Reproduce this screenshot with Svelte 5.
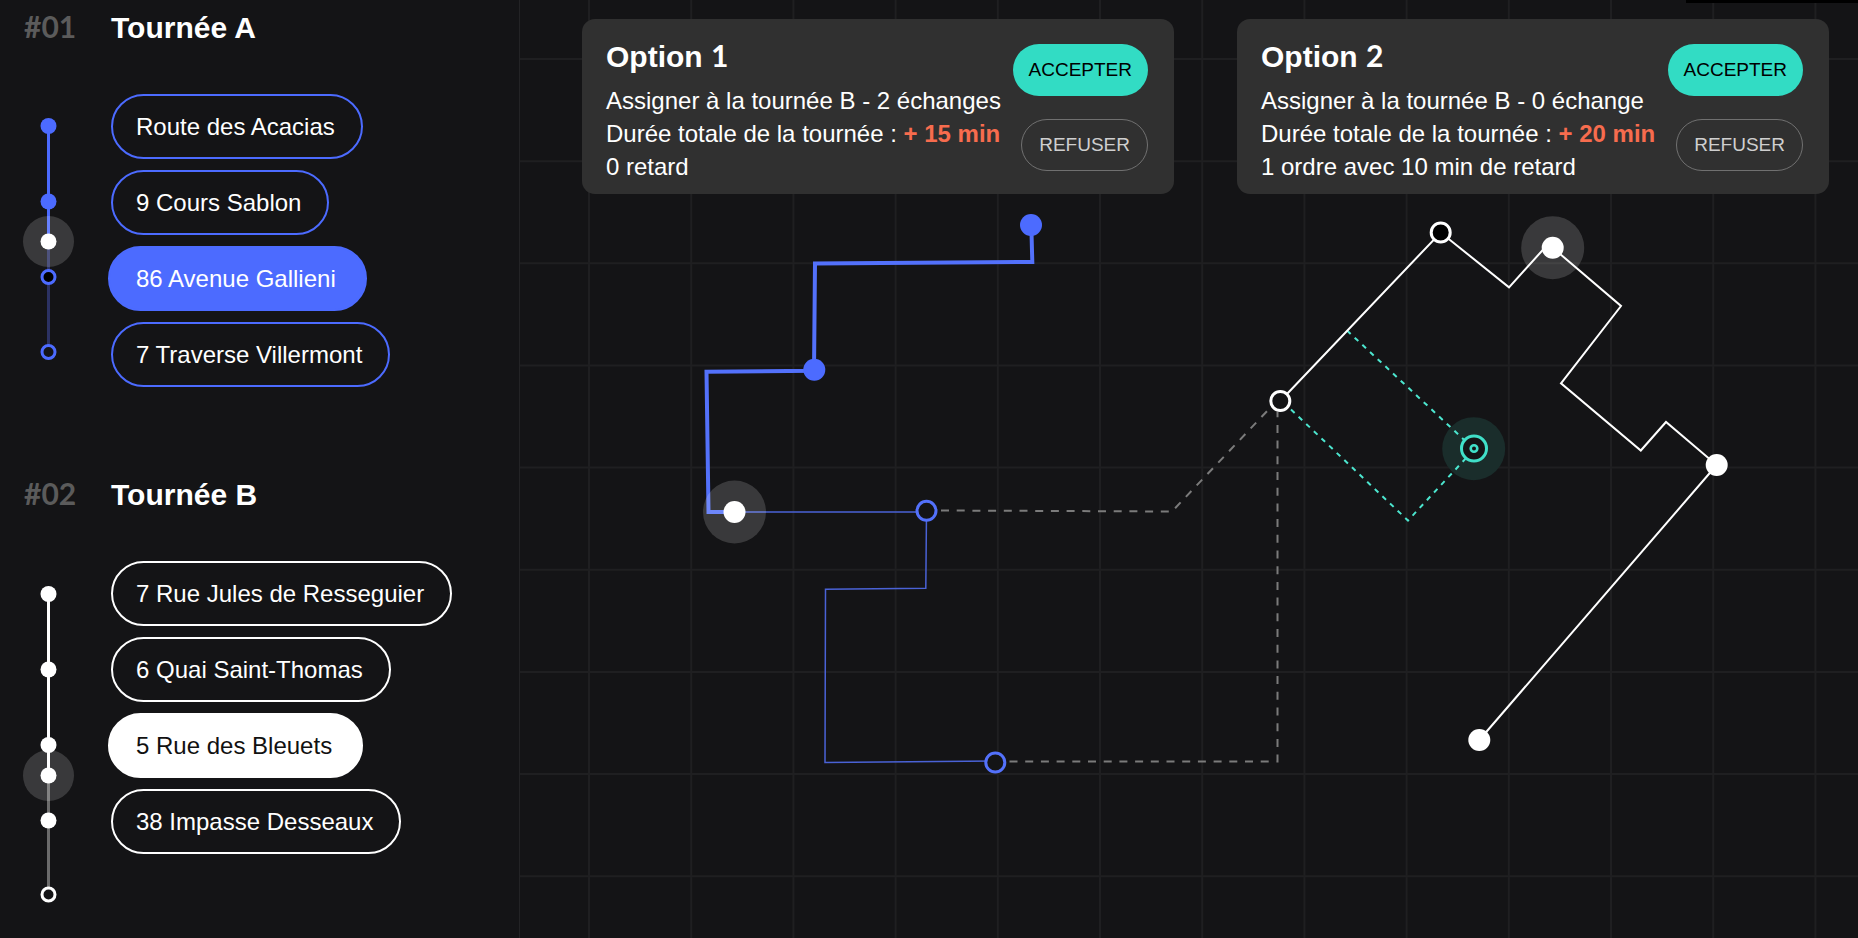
<script>
  const tours = [
    {
      id: '#01',
      name: 'Tournée A',
      tone: 'blue',
      stops: ['Route des Acacias', '9 Cours Sablon', '86 Avenue Gallieni', '7 Traverse Villermont'],
      active: 2,
      position: 147.5,
      end: 258,
      done: [32, 107.5],
      open: [183, 258],
      current: 183
    },
    {
      id: '#02',
      name: 'Tournée B',
      tone: 'white',
      stops: ['7 Rue Jules de Resseguier', '6 Quai Saint-Thomas', '5 Rue des Bleuets', '38 Impasse Desseaux'],
      active: 2,
      position: 214.5,
      end: 333.5,
      done: [33, 108.5, 184, 259.5],
      open: [333.5],
      current: null
    }
  ];

  const options = [
    { n: 1, plan: 'Assigner à la tournée B - 2 échanges', extra: '+ 15 min', delay: '0 retard' },
    { n: 2, plan: 'Assigner à la tournée B - 0 échange', extra: '+ 20 min', delay: '1 ordre avec 10 min de retard' }
  ];

  const columns = Array.from({ length: 13 }, (_, i) => 589 + i * 102.2);
  const rows = Array.from({ length: 9 }, (_, i) => 59 + i * 102.15);
</script>

<div class="page">
  <aside class="sidebar">
    {#each tours as tour}
      <section class="tour {tour.tone}">
        <span class="tour-id">{tour.id}</span>
        <h2>{tour.name}</h2>
        <svg class="timeline" width="50" height="260" viewBox="0 0 50 260" aria-hidden="true">
          <line class="ahead" x1="24.5" x2="24.5" y1={tour.position} y2={tour.end} />
          <line class="travelled" x1="24.5" x2="24.5" y1={tour.done[0]} y2={tour.position} />
          <circle class="halo" cx="24.5" cy={tour.position} r="25.5" />
          {#each tour.done as y}
            <circle class="dot" cx="24.5" cy={y} r="8" />
          {/each}
          {#each tour.open as y}
            <circle class="ring" class:next={y === tour.current} cx="24.5" cy={y} r="6.5" />
          {/each}
          <circle class="here" cx="24.5" cy={tour.position} r="8" />
        </svg>
        <ul>
          {#each tour.stops as stop, i}
            <li><button type="button" class="pill" class:active={i === tour.active}>{stop}</button></li>
          {/each}
        </ul>
      </section>
    {/each}
  </aside>

  <main class="map">
    <svg class="plan" viewBox="520 0 1338 938" preserveAspectRatio="xMinYMin meet" aria-hidden="true">
      <g class="grid">
        {#each columns as x}
          <line x1={x} x2={x} y1="0" y2="938" />
        {/each}
        {#each rows as y}
          <line x1="520" x2="1858" y1={y} y2={y} />
        {/each}
      </g>
      <rect x="1686" y="0" width="172" height="3" fill="#000" />

      <g class="link">
        <path d="M941 510.5 L1172 511.5 L1270 408" />
        <path d="M1009.5 761.5 H1277.5 V412" />
      </g>

      <g class="route-a">
        <path class="thin" d="M734.5 512 H926.5 L925.8 588.3 L825.5 589.3 L825 762.5 L995 761" />
        <path class="thick" d="M1031.3 225 L1032.3 262 L815 263.5 L814 370.7 L706.5 371.7 L708.5 512 H734.5" />
        <circle class="dot" cx="1031" cy="225" r="11" />
        <circle class="dot" cx="814.3" cy="369.7" r="11" />
        <circle class="ring" cx="926.5" cy="510.8" r="9.5" />
        <circle class="ring" cx="995.3" cy="762.5" r="9.5" />
      </g>
      <circle class="halo" cx="734.5" cy="512" r="31.5" />
      <circle class="here" cx="734.5" cy="512" r="11" />

      <g class="insert">
        <circle class="glow" cx="1473.7" cy="448.7" r="31.5" />
        <path d="M1347 330.5 L1468 443.5" />
        <path d="M1291 409.5 L1408 520.5 L1468 456" />
        <circle class="outer" cx="1474" cy="448.5" r="12.5" />
        <circle class="inner" cx="1474" cy="448.5" r="3.3" />
      </g>

      <circle class="halo" cx="1552.7" cy="247.7" r="31.5" />
      <g class="route-b">
        <path d="M1280.3 401 L1440.7 232.5 L1509 287.3 L1545 247.5 L1552.7 247.7 L1621 306 L1561 383.3 L1640.8 450.5 L1666 422 L1716.7 465 L1479.3 740" />
        <circle class="ring" cx="1280.3" cy="401" r="9.5" />
        <circle class="ring next" cx="1440.7" cy="232.5" r="9.5" />
        <circle class="dot" cx="1552.7" cy="247.7" r="11" />
        <circle class="dot" cx="1716.7" cy="465" r="11" />
        <circle class="dot" cx="1479.3" cy="740" r="11" />
      </g>
    </svg>

    <div class="options">
      {#each options as option}
        <article class="card">
          <div class="details">
            <h2>Option <span class="num">{option.n}</span></h2>
            <p>{option.plan}</p>
            <p>Durée totale de la tournée : <strong>{option.extra}</strong></p>
            <p>{option.delay}</p>
          </div>
          <div class="actions">
            <button type="button" class="accept">ACCEPTER</button>
            <button type="button" class="refuse">REFUSER</button>
          </div>
        </article>
      {/each}
    </div>
  </main>
</div>

<style>
  :global(body) {
    background: #141416;
  }

  .page {
    --blue: #4c6bff;
    --teal: #32dcc4;
    --ink: #141416;
    display: grid;
    grid-template-columns: 519px minmax(0, 1fr);
    min-height: 100vh;
    background: var(--ink);
    color: #fff;
    font-family: 'Liberation Sans', Arial, sans-serif;
    font-size: 24px;
  }

  h2,
  p,
  ul {
    margin: 0;
    padding: 0;
  }

  h2 {
    font-size: 30px;
    line-height: 36px;
    font-weight: 700;
  }

  button {
    font-family: inherit;
    cursor: pointer;
    white-space: nowrap;
  }

  .sidebar {
    display: flex;
    flex-direction: column;
    gap: 90px;
    padding: 10px 24px 0;
  }

  .tour {
    --tone: #fff;
    --tone-dim: #6b6b6b;
    display: grid;
    grid-template-columns: 87px 1fr;
    row-gap: 48px;
    align-items: start;
  }

  .tour.blue {
    --tone: var(--blue);
    --tone-dim: #2c3263;
  }

  .tour-id {
    color: #5b5b5b;
    font-size: 30px;
    line-height: 30px;
    font-weight: 700;
    font-family: Lato, 'Liberation Sans', sans-serif;
  }

  .tour-id,
  .tour h2 {
    align-self: baseline;
  }

  .num {
    font-family: Lato, 'Liberation Sans', sans-serif;
    line-height: 30px;
  }

  .timeline {
    display: block;
    overflow: visible;
  }

  .timeline line {
    stroke-width: 3;
  }

  .travelled {
    stroke: var(--tone);
  }

  .ahead {
    stroke: var(--tone-dim);
  }

  .halo {
    fill: rgba(255, 255, 255, 0.16);
  }

  .here {
    fill: #fff;
  }

  .timeline .dot {
    fill: var(--tone);
  }

  .ring {
    fill: var(--ink);
    stroke-width: 3;
  }

  .ring.next {
    fill: #000;
  }

  .timeline .ring {
    stroke: var(--tone);
  }

  ul {
    list-style: none;
    display: flex;
    flex-direction: column;
    align-items: flex-start;
    gap: 11px;
  }

  li {
    display: flex;
  }

  .pill {
    height: 65px;
    padding: 0 26px 0 23px;
    border: 2px solid var(--tone);
    border-radius: 33px;
    background: transparent;
    color: #fff;
    font-size: 24px;
  }

  .pill.active {
    margin-left: -3px;
    padding: 0 29px 0 26px;
    background: var(--tone);
  }

  .white .pill.active {
    color: #111;
  }

  .map {
    display: grid;
    align-items: start;
    border-left: 1px solid #232325;
  }

  .plan,
  .options {
    grid-area: 1 / 1;
  }

  .plan {
    display: block;
    width: 100%;
    height: auto;
  }

  .grid line {
    stroke: #1f1f21;
    stroke-width: 2;
  }

  .link path {
    fill: none;
    stroke: #7b7b7b;
    stroke-width: 2;
    stroke-dasharray: 8 7.7;
  }

  .route-a path {
    fill: none;
    stroke: #5371fb;
  }

  .route-a .thick {
    stroke-width: 4;
  }

  .route-a .thin {
    stroke: #4a62d6;
    stroke-width: 1.5;
  }

  .route-a .dot {
    fill: var(--blue);
  }

  .route-a .ring {
    stroke: #5371fb;
  }

  .route-b path {
    fill: none;
    stroke: #fff;
    stroke-width: 2;
  }

  .route-b .dot {
    fill: #fff;
  }

  .route-b .ring {
    stroke: #fff;
  }

  .insert path {
    fill: none;
    stroke: #4ce6cf;
    stroke-width: 2;
    stroke-dasharray: 5 5.5;
  }

  .glow {
    fill: #1a2d2b;
  }

  .outer {
    fill: var(--ink);
    stroke: #40dfc8;
    stroke-width: 3;
  }

  .inner {
    fill: none;
    stroke: #40dfc8;
    stroke-width: 2.6;
  }

  .options {
    display: grid;
    grid-template-columns: repeat(2, minmax(0, 1fr));
    gap: 63px;
    padding: 19px 29px 0 62px;
  }

  .card {
    display: flex;
    justify-content: space-between;
    gap: 8px;
    padding: 20px 26px 11px 24px;
    border-radius: 13px;
    background: #303030;
  }

  .details p {
    line-height: 33px;
    white-space: nowrap;
  }

  .details h2 {
    height: 36px;
    margin-bottom: 9px;
  }

  strong {
    color: #f76c4e;
  }

  .actions {
    display: flex;
    flex-direction: column;
    align-items: flex-end;
    gap: 23px;
    padding-top: 5px;
  }

  .actions button {
    height: 52px;
    border-radius: 26px;
    font-size: 19px;
  }

  .accept {
    padding: 0 16px;
    border: 0;
    background: var(--teal);
    color: #000;
  }

  .refuse {
    padding: 0 17px;
    border: 1px solid #707070;
    background: transparent;
    color: #cfcfcf;
  }
</style>
